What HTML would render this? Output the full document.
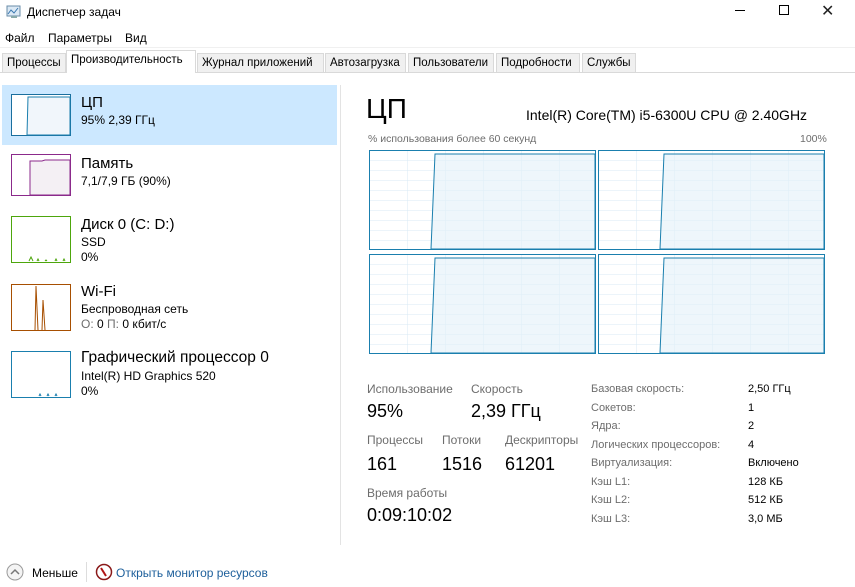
<!DOCTYPE html>
<html><head><meta charset="utf-8"><style>
*{margin:0;padding:0;box-sizing:border-box}
body{width:855px;height:587px;background:#fff;font-family:"Liberation Sans","DejaVu Sans",sans-serif;color:#000;position:relative;overflow:hidden}
.a{position:absolute;white-space:nowrap}
.s12{font-size:12px}
.g{color:#6d6d6d}
.tab{position:absolute;top:53px;height:19px;background:#f0f0f0;border:1px solid #d9d9d9;border-bottom:none;font-size:11.5px;padding:3px 0 0 4px;color:#000;overflow:hidden}
</style></head><body>
<!-- title bar -->
<svg class="a" style="left:6px;top:5px" width="16" height="14"><rect x="1" y="1" width="13" height="10" fill="#dbe9f5" stroke="#6a8ca8"/><polyline points="2,9 5,5 8,8 12,3" fill="none" stroke="#3a78b0"/><rect x="5" y="11" width="6" height="2" fill="#8aa"/></svg>
<div class="a s12" style="left:27px;top:5px">Диспетчер задач</div>
<div class="a" style="left:735px;top:10px;width:10px;height:1px;background:#000"></div>
<div class="a" style="left:779px;top:5px;width:10px;height:10px;border:1px solid #000"></div>
<div class="a" style="left:821px;top:1px;font-size:16px;color:#222">✕</div>
<!-- menu -->
<div class="a s12" style="left:5px;top:31px">Файл</div>
<div class="a s12" style="left:48px;top:31px">Параметры</div>
<div class="a s12" style="left:125px;top:31px">Вид</div>
<div class="a" style="left:0;top:47px;width:855px;height:1px;background:#f0f0f0"></div>
<!-- tabs -->
<div class="a" style="left:0;top:72px;width:855px;height:1px;background:#d9d9d9"></div>
<div class="tab" style="left:2px;width:64px">Процессы</div>
<div class="tab" style="left:66px;width:130px;top:50px;height:23px;background:#fff;padding-top:3px">Производительность</div>
<div class="tab" style="left:197px;width:127px">Журнал приложений</div>
<div class="tab" style="left:325px;width:81px">Автозагрузка</div>
<div class="tab" style="left:408px;width:86px">Пользователи</div>
<div class="tab" style="left:496px;width:84px">Подробности</div>
<div class="tab" style="left:582px;width:54px">Службы</div>
<!-- left panel -->
<div class="a" style="left:2px;top:85px;width:335px;height:60px;background:#cce8ff"></div>
<div class="a" style="left:340px;top:85px;width:1px;height:460px;background:#e3e3e3"></div>
<svg class="a" style="left:11px;top:94px" width="61" height="43"><rect x="0.5" y="0.5" width="59" height="41" fill="#fff" stroke="#1a6f9e"/><path d="M16,41 L17,3 L59,3 L59,41Z" fill="#f1f6fb" stroke="#1a7fae"/></svg>
<div class="a" style="left:81px;top:94px;font-size:15px">ЦП</div>
<div class="a s12" style="left:81px;top:113px">95% 2,39 ГГц</div>

<svg class="a" style="left:11px;top:154px" width="61" height="43"><rect x="0.5" y="0.5" width="59" height="41" fill="#fff" stroke="#8b2a8b"/><path d="M19,41 L19,7 L31,7 L34,6 L59,6 L59,41Z" fill="#f4f0f4" stroke="#8b2a8b"/></svg>
<div class="a" style="left:81px;top:155px;font-size:15px">Память</div>
<div class="a s12" style="left:81px;top:174px">7,1/7,9 ГБ (90%)</div>

<svg class="a" style="left:11px;top:216px" width="61" height="48"><rect x="0.5" y="0.5" width="59" height="46" fill="#fff" stroke="#4da60c"/><path d="M18,45 L20,41 L22,45 M26,45 L27,43 L28,45 M34,45 L35,44 L36,45 M44,45 L45,43 L46,45 M52,45 L53,43 L54,45" fill="none" stroke="#4da60c"/></svg>
<div class="a" style="left:81px;top:216px;font-size:15px">Диск 0 (C: D:)</div>
<div class="a s12" style="left:81px;top:235px">SSD</div>
<div class="a s12" style="left:81px;top:250px">0%</div>

<svg class="a" style="left:11px;top:284px" width="61" height="48"><rect x="0.5" y="0.5" width="59" height="46" fill="#fff" stroke="#a74f01"/><path d="M24,46 L25,2 L27,46 M31,46 L32,16 L34,46" fill="none" stroke="#a74f01"/></svg>
<div class="a" style="left:81px;top:283px;font-size:15px">Wi-Fi</div>
<div class="a s12" style="left:81px;top:302px">Беспроводная сеть</div>
<div class="a s12" style="left:81px;top:317px"><span class="g">О:</span> 0 <span class="g">П:</span> 0 кбит/с</div>

<svg class="a" style="left:11px;top:351px" width="61" height="48"><rect x="0.5" y="0.5" width="59" height="46" fill="#fff" stroke="#1a7fae"/><path d="M28,45 L29,43 L30,45 M36,45 L37,43 L38,45 M44,45 L45,43 L46,45" fill="none" stroke="#1a7fae"/></svg>
<div class="a" style="left:81px;top:349px;font-size:15.5px">Графический процессор 0</div>
<div class="a s12" style="left:81px;top:369px">Intel(R) HD Graphics 520</div>
<div class="a s12" style="left:81px;top:384px">0%</div>

<!-- right panel -->
<div class="a" style="left:366px;top:93px;font-size:28px;font-weight:300">ЦП</div>
<div class="a" style="left:526px;top:107px;font-size:14px">Intel(R) Core(TM) i5-6300U CPU @ 2.40GHz</div>
<div class="a g" style="left:368px;top:133px;font-size:10.5px">% использования более 60 секунд</div>
<div class="a g" style="left:800px;top:133px;font-size:10.5px">100%</div>
<svg class="a" style="left:368px;top:149px" width="460" height="207">
<defs>
<pattern id="gr" x="0" y="0" width="38" height="10" patternUnits="userSpaceOnUse"><path d="M0,0 H38 M0,0 V10" stroke="#d9eaf4" stroke-width="1" fill="none"/></pattern>
<g id="cell"><rect x="0.5" y="0.5" width="226" height="99" fill="url(#gr)"/><path d="M62,99 L66,4 L226,4 L226,99Z" fill="#e3f0f9" fill-opacity="0.6" stroke="#1a7fae"/><rect x="0.5" y="0.5" width="226" height="99" fill="none" stroke="#1a7fae"/></g>
</defs>
<use href="#cell" x="1" y="1"/><use href="#cell" x="230" y="1"/>
<use href="#cell" x="1" y="105"/><use href="#cell" x="230" y="105"/>
</svg>
<!-- stats -->
<div class="a g s12" style="left:367px;top:382px">Использование</div>
<div class="a g s12" style="left:471px;top:382px">Скорость</div>
<div class="a" style="left:367px;top:401px;font-size:18px">95%</div>
<div class="a" style="left:471px;top:401px;font-size:18px">2,39 ГГц</div>
<div class="a g s12" style="left:367px;top:433px">Процессы</div>
<div class="a g s12" style="left:442px;top:433px">Потоки</div>
<div class="a g s12" style="left:505px;top:433px">Дескрипторы</div>
<div class="a" style="left:367px;top:454px;font-size:18px">161</div>
<div class="a" style="left:442px;top:454px;font-size:18px">1516</div>
<div class="a" style="left:505px;top:454px;font-size:18px">61201</div>
<div class="a g s12" style="left:367px;top:486px">Время работы</div>
<div class="a" style="left:367px;top:505px;font-size:18px">0:09:10:02</div>

<div class="a g" style="left:591px;top:380px;font-size:11px;line-height:18.5px">Базовая скорость:<br>Сокетов:<br>Ядра:<br>Логических процессоров:<br>Виртуализация:<br>Кэш L1:<br>Кэш L2:<br>Кэш L3:</div>
<div class="a" style="left:748px;top:380px;font-size:11px;line-height:18.5px">2,50 ГГц<br>1<br>2<br>4<br>Включено<br>128 КБ<br>512 КБ<br>3,0 МБ</div>

<!-- footer -->
<svg class="a" style="left:6px;top:563px" width="18" height="18"><circle cx="9" cy="9" r="8" fill="#f4f4f4" stroke="#9a9a9a"/><path d="M5,11 L9,7 L13,11" fill="none" stroke="#777" stroke-width="1.5"/></svg>
<div class="a s12" style="left:32px;top:566px">Меньше</div>
<div class="a" style="left:86px;top:562px;width:1px;height:20px;background:#ddd"></div>
<svg class="a" style="left:95px;top:563px" width="18" height="18"><circle cx="9" cy="9" r="7.5" fill="#fff" stroke="#8a1a1a" stroke-width="1.5"/><path d="M6,5 L11,13" stroke="#b01515" stroke-width="2"/></svg>
<div class="a s12" style="left:116px;top:566px;color:#1d5f9b">Открыть монитор ресурсов</div>
</body></html>
